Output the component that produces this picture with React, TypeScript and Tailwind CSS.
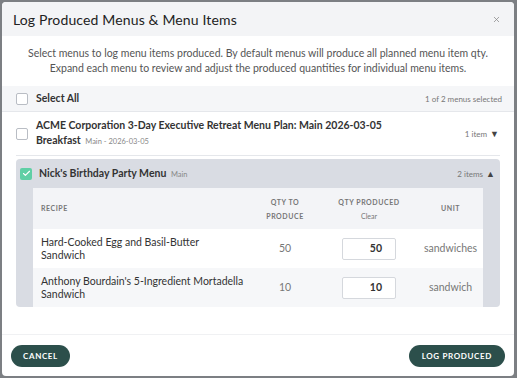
import { Check, X } from 'lucide-react';

const rows = [
  { name: ['Hard-Cooked Egg and Basil-Butter', 'Sandwich'], qty: 50, produced: 50, unit: 'sandwiches' },
  { name: ["Anthony Bourdain's 5-Ingredient Mortadella", 'Sandwich'], qty: 10, produced: 10, unit: 'sandwich' },
];

function Box({ checked }: { checked?: boolean }) {
  if (checked) {
    return (
      <div className="w-[12px] h-[12px] rounded-[2px] bg-[#5fcfa5] flex items-center justify-center shrink-0">
        <Check className="w-[9px] h-[9px] text-white" strokeWidth={3} />
      </div>
    );
  }
  return <div className="w-[12px] h-[12px] rounded-[2px] border border-[#b9bdc4] bg-white shrink-0" />;
}

export default function App() {
  return (
    <div className="w-[517px] h-[378px] bg-[#7c7f83] p-[2px] font-['Lato',sans-serif]">
      <div className="w-[512px] h-[374px] bg-white rounded-[4px] overflow-hidden flex flex-col">
        <div className="h-[34px] bg-[#f3f4f6] flex items-center justify-between pl-[11px] pr-[13px] shrink-0">
          <h1 className="text-[14px] tracking-[0.01em] text-[#222] leading-none pt-[2px]">Log Produced Menus &amp; Menu Items</h1>
          <X className="w-[9px] h-[9px] text-[#888]" strokeWidth={2} />
        </div>

        <p className="text-[10.5px] leading-[15px] text-[#555] text-center pt-[10px] pb-[10px] px-[8px] whitespace-nowrap">
          Select menus to log menu items produced. By default menus will produce all planned menu item qty.
          <br />
          Expand each menu to review and adjust the produced quantities for individual menu items.
        </p>

        <div className="h-[26px] bg-[#f5f6f8] border-b border-[#e5e7eb] flex items-center justify-between pl-[14px] pr-[12px] shrink-0">
          <div className="flex items-center gap-[8px]">
            <Box />
            <span className="text-[10.5px] font-bold text-[#333]">Select All</span>
          </div>
          <span className="text-[8px] text-[#777]">1 of 2 menus selected</span>
        </div>

        <div className="px-[14px]">
          <div className="h-[44px] border-b border-[#e5e7eb] flex items-center justify-between">
            <div className="flex items-center gap-[8px]">
              <Box />
              <div className="text-[10.5px] font-bold text-[#333] leading-[15px]">
                <div>ACME Corporation 3-Day Executive Retreat Menu Plan: Main 2026-03-05</div>
                <div>
                  Breakfast <span className="text-[7.5px] font-normal text-[#888] ml-[2px]">Main - 2026-03-05</span>
                </div>
              </div>
            </div>
            <span className="text-[8px] text-[#777] flex items-center gap-[3px] pr-[1px]">
              1 item <span className="text-[9px] text-[#444]">▼</span>
            </span>
          </div>

          <div className="mt-[3px] bg-[#d9dce3] rounded-[4px] h-[148px] overflow-hidden">
            <div className="h-[29px] flex items-center justify-between pl-[4px] pr-[5px]">
              <div className="flex items-center gap-[7px]">
                <Box checked />
                <span className="text-[10.5px] font-bold text-[#333]">
                  Nick's Birthday Party Menu <span className="text-[7.5px] font-normal text-[#888] ml-[2px]">Main</span>
                </span>
              </div>
              <span className="text-[8px] text-[#777] flex items-center gap-[3px]">
                2 items <span className="text-[9px] text-[#444]">▲</span>
              </span>
            </div>

            <div className="mx-[17px] bg-white rounded-t-[2px]">
              <div className="h-[41px] bg-[#f3f4f7] grid grid-cols-[217px_70px_98px_1fr] items-center text-[7px] font-bold tracking-[0.08em] text-[#777] uppercase">
                <div className="pl-[8px]">Recipe</div>
                <div className="text-center leading-[14px]">
                  Qty to
                  <br />
                  Produce
                </div>
                <div className="text-center leading-[14px]">
                  Qty Produced
                  <br />
                  <span className="normal-case font-normal tracking-normal">Clear</span>
                </div>
                <div className="text-center">Unit</div>
              </div>
              {rows.map((r, i) => (
                <div
                  key={r.name[0]}
                  className={`h-[39px] grid grid-cols-[217px_70px_98px_1fr] items-center ${i % 2 === 1 ? 'bg-[#f6f7f9]' : 'bg-white'}`}
                >
                  <div className="pl-[8px] text-[10.5px] leading-[13px] text-[#333] whitespace-nowrap">
                    {r.name[0]}
                    <br />
                    {r.name[1]}
                  </div>
                  <div className="text-center text-[10.5px] text-[#777]">{r.qty}</div>
                  <div className="flex justify-center">
                    <div className="w-[54px] h-[22px] border border-[#d5d8dd] rounded-[2px] bg-white flex items-center justify-end pr-[13px] text-[10.5px] font-bold text-[#333]">
                      {r.produced}
                    </div>
                  </div>
                  <div className="text-center text-[10.5px] text-[#777]">{r.unit}</div>
                </div>
              ))}
            </div>
          </div>
        </div>

        <div className="flex-1" />
        <div className="h-[42px] border-t border-[#f0f1f3] flex items-start justify-between px-[9px] pt-[10px] shrink-0">
          <button className="h-[22px] px-[12px] rounded-full bg-[#2c4f4b] text-white text-[8px] font-bold tracking-[0.08em]">
            CANCEL
          </button>
          <button className="h-[22px] px-[13px] rounded-full bg-[#2c4f4b] text-white text-[8px] font-bold tracking-[0.08em]">
            LOG PRODUCED
          </button>
        </div>
      </div>
    </div>
  );
}
